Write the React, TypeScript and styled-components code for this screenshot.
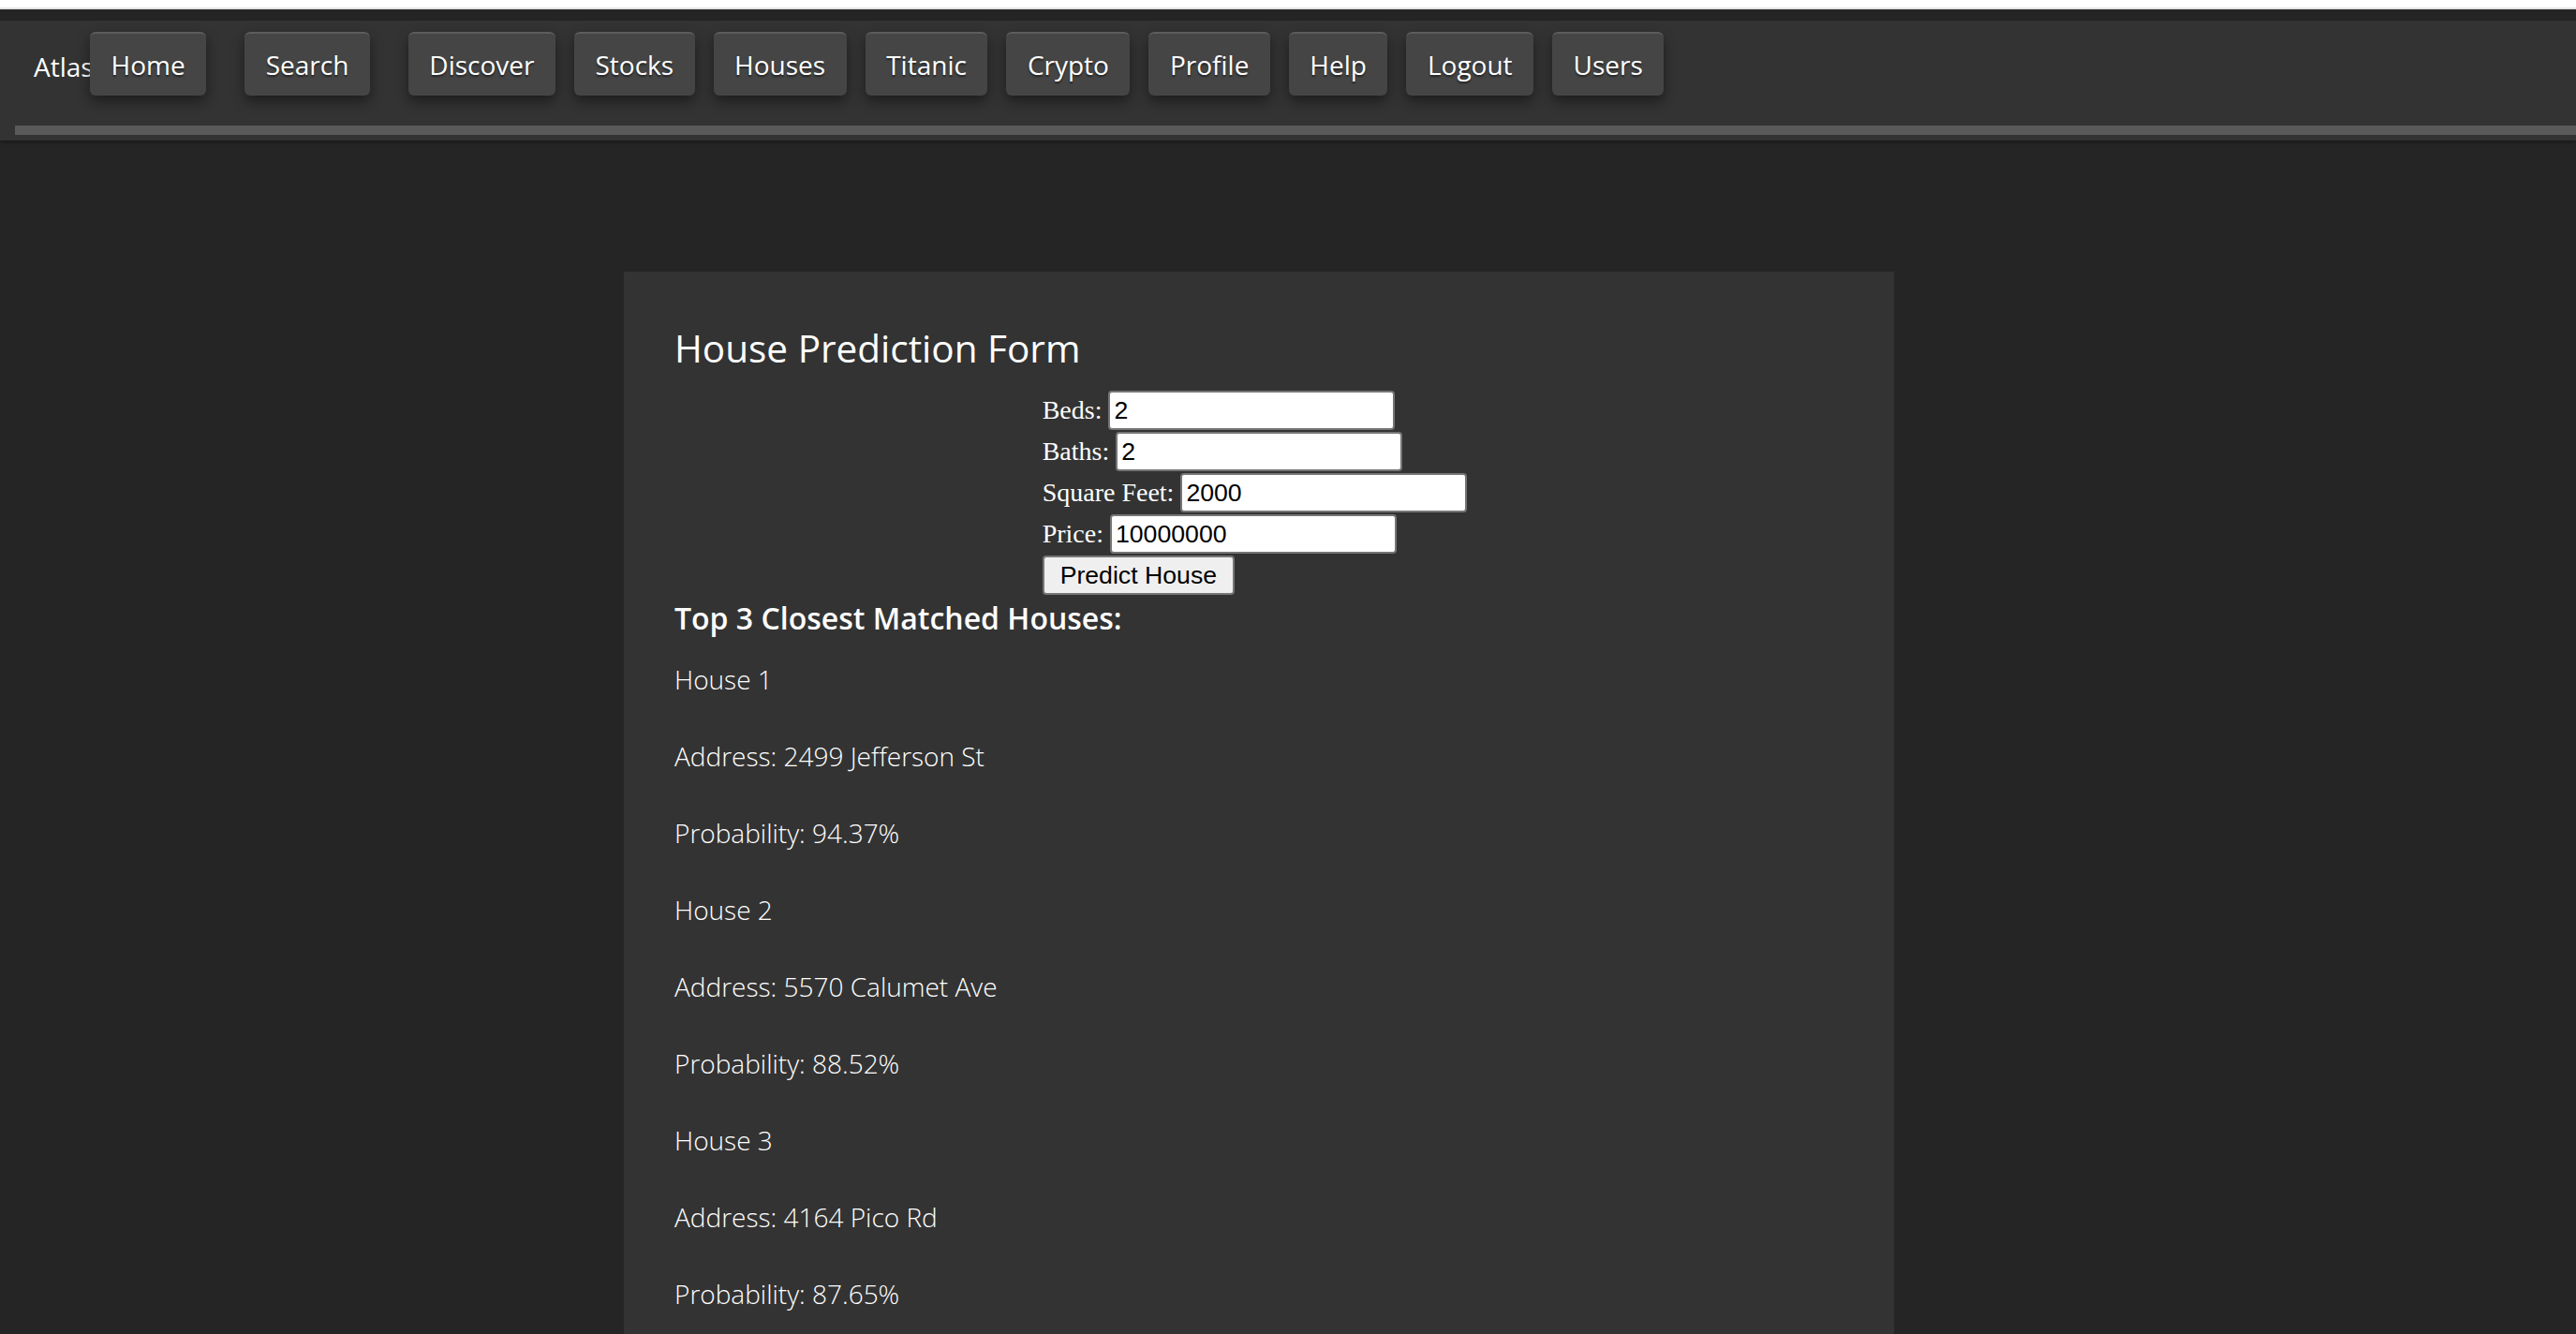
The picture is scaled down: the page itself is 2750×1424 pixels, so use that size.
import React from "react";
import styled, { createGlobalStyle } from "styled-components";

const GlobalStyle = createGlobalStyle`
  html, body {
    margin: 0;
    padding: 0;
    background: #252525;
  }
  body {
    font-family: "Open Sans", "Liberation Sans", sans-serif;
    color: #ffffff;
  }
`;

const TopStrip = styled.div`
  height: 8px;
  background: #ffffff;
  border-bottom: 2px solid #e2e2e2;
`;

const Page = styled.div`
  padding-top: 12px;
  min-height: 1414px;
  box-sizing: border-box;
`;

const NavBar = styled.nav`
  background: #333333;
  height: 128px;
  padding-top: 12px;
  box-sizing: border-box;
  display: flex;
  flex-direction: column;
  box-shadow: 0 2px 4px rgba(0, 0, 0, 0.35);
  position: relative;
`;

const NavRow = styled.div`
  display: flex;
  align-items: center;
  height: 68px;
  padding-left: 36px;
`;

const Brand = styled.span`
  width: 50px;
  font-size: 28px;
  line-height: 38px;
  white-space: nowrap;
  margin-top: 6px;
`;

const NavButton = styled.button<{ $spaced?: boolean }>`
  height: 68px;
  padding: 0 22.5px;
  margin: 0 ${(p) => (p.$spaced ? "31px" : "10px")} 0 10px;
  background: #454545;
  color: #ffffff;
  border: none;
  border-top: 2px solid #5c5c5c;
  border-radius: 6px;
  font-family: "Open Sans", "Liberation Sans", sans-serif;
  font-size: 28px;
  font-weight: 400;
  line-height: 38px;
  box-shadow: 0 6px 14px rgba(0, 0, 0, 0.45);
  text-shadow: 0 2px 2px rgba(0, 0, 0, 0.5);
  cursor: pointer;
`;

const Rule = styled.div`
  height: 10px;
  margin: 32px 0 0 16px;
  background: #5a5a5a;
`;

const Card = styled.main`
  width: 1356px;
  margin: 140px 0 0 666px;
  padding: 55px 63px 90px 54px;
  box-sizing: border-box;
  background: #333333;
`;

const Title = styled.h2`
  margin: 0 0 17px;
  font-size: 40.5px;
  line-height: 54px;
  font-weight: 400;
`;

const Form = styled.form`
  display: flex;
  flex-direction: column;
  align-items: flex-start;
  width: fit-content;
  margin: 0 auto;
`;

const Row = styled.div`
  display: flex;
  align-items: center;
  height: 44px;
`;

const Label = styled.label`
  font-family: "Liberation Serif", "Times New Roman", serif;
  font-size: 28px;
  font-weight: 400;
  margin-right: 7px;
`;

const Input = styled.input`
  width: 306px;
  height: 42px;
  box-sizing: border-box;
  border: 2px solid #767676;
  border-radius: 4px;
  padding: 2px 4px;
  background: #ffffff;
  color: #000000;
  font-family: "Liberation Sans", Arial, sans-serif;
  font-size: 26.67px;
`;

const SubmitButton = styled.button`
  height: 42px;
  padding: 0 17px;
  background: #efefef;
  border: 2px solid #767676;
  border-radius: 4px;
  color: #000000;
  font-family: "Liberation Sans", Arial, sans-serif;
  font-size: 26.67px;
`;

const ResultsTitle = styled.h3`
  margin: 2px 0 24px;
  font-size: 32px;
  line-height: 44px;
  font-weight: 600;
`;

const Line = styled.p`
  margin: 0 0 44px;
  font-size: 28px;
  line-height: 38px;
  font-weight: 300;
`;

const navItems = [
  "Home",
  "Search",
  "Discover",
  "Stocks",
  "Houses",
  "Titanic",
  "Crypto",
  "Profile",
  "Help",
  "Logout",
  "Users",
];

const fields = [
  { label: "Beds:", value: "2" },
  { label: "Baths:", value: "2" },
  { label: "Square Feet:", value: "2000" },
  { label: "Price:", value: "10000000" },
];

const matches = [
  { address: "2499 Jefferson St", probability: "94.37%" },
  { address: "5570 Calumet Ave", probability: "88.52%" },
  { address: "4164 Pico Rd", probability: "87.65%" },
];

const App: React.FC = () => {
  return (
    <>
      <GlobalStyle />
      <TopStrip />
      <Page>
        <NavBar>
          <NavRow>
            <Brand>Atlas</Brand>
            {navItems.map((item, i) => (
              <NavButton key={item} $spaced={i < 2}>
                {item}
              </NavButton>
            ))}
          </NavRow>
          <Rule />
        </NavBar>

        <Card>
          <Title>House Prediction Form</Title>
          <Form onSubmit={(e) => e.preventDefault()}>
            {fields.map((f) => (
              <Row key={f.label}>
                <Label>{f.label}</Label>
                <Input type="text" defaultValue={f.value} />
              </Row>
            ))}
            <Row>
              <SubmitButton type="submit">Predict House</SubmitButton>
            </Row>
          </Form>

          <ResultsTitle>Top 3 Closest Matched Houses:</ResultsTitle>
          {matches.map((m, i) => (
            <React.Fragment key={m.address}>
              <Line>House {i + 1}</Line>
              <Line>Address: {m.address}</Line>
              <Line>Probability: {m.probability}</Line>
            </React.Fragment>
          ))}
        </Card>
      </Page>
    </>
  );
};

export default App;
